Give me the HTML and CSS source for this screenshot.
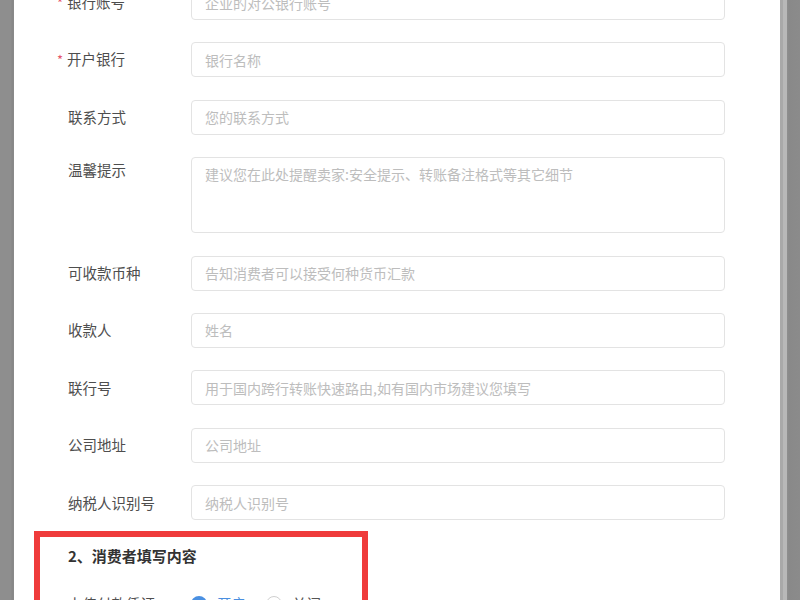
FILE: index.html
```html
<!DOCTYPE html>
<html lang="zh-CN">
<head>
<meta charset="utf-8">
<title>收款信息</title>
<link rel="stylesheet" href="styles.css">
</head>
<body>
<div class="screen">
  <div class="side-left"></div>
  <main class="panel">
    <form class="form">
      <div class="row">
        <label class="label"><span class="req">*</span>银行账号</label>
        <div class="input"><span class="ph">企业的对公银行账号</span></div>
      </div>
      <div class="row">
        <label class="label"><span class="req">*</span>开户银行</label>
        <div class="input"><span class="ph">银行名称</span></div>
      </div>
      <div class="row">
        <label class="label">联系方式</label>
        <div class="input"><span class="ph">您的联系方式</span></div>
      </div>
      <div class="row row-top">
        <label class="label">温馨提示</label>
        <div class="input textarea"><span class="ph">建议您在此处提醒卖家:安全提示、转账备注格式等其它细节</span></div>
      </div>
      <div class="row">
        <label class="label">可收款币种</label>
        <div class="input"><span class="ph">告知消费者可以接受何种货币汇款</span></div>
      </div>
      <div class="row">
        <label class="label">收款人</label>
        <div class="input"><span class="ph">姓名</span></div>
      </div>
      <div class="row">
        <label class="label">联行号</label>
        <div class="input"><span class="ph">用于国内跨行转账快速路由,如有国内市场建议您填写</span></div>
      </div>
      <div class="row">
        <label class="label">公司地址</label>
        <div class="input"><span class="ph">公司地址</span></div>
      </div>
      <div class="row">
        <label class="label">纳税人识别号</label>
        <div class="input"><span class="ph">纳税人识别号</span></div>
      </div>
    </form>
    <section class="highlight">
      <h3 class="sec-title">2、消费者填写内容</h3>
      <div class="row">
        <label class="label">上传付款凭证</label>
        <div class="radios">
          <span class="radio checked"><span class="dot"></span>开启</span>
          <span class="radio"><span class="dot"></span>关闭</span>
        </div>
      </div>
    </section>
  </main>
  <div class="side-right"></div>
</div>
</body>
</html>
```

FILE: styles.css
```css
* { box-sizing: border-box; }
html, body {
  margin: 0;
  padding: 0;
  width: 800px;
  height: 600px;
  overflow: hidden;
  background: #fff;
  font-family: "Noto Sans CJK SC", "Noto Sans", "Liberation Sans", sans-serif;
}
.screen {
  display: flex;
  width: 800px;
  height: 600px;
}
.side-left {
  width: 14px;
  flex: none;
  background: linear-gradient(to right, #8e8e8e 0, #8e8e8e 11px, #868686 12px, #8a8a8a 14px);
}
.side-right {
  width: 20px;
  flex: none;
  background: linear-gradient(to right, #a9a9a9 0, #a9a9a9 3px, #b8b8b8 3px, #b8b8b8 7px, #8f8f8f 7px, #898989 9px, #8b8b8b 20px);
}
.panel {
  flex: 1;
  background: #fff;
  overflow: hidden;
}
.form {
  display: flex;
  flex-direction: column;
  gap: 22.4px;
  margin-top: -15px;
  padding-right: 55px;
}
.row {
  display: flex;
  align-items: center;
}
.row-top { align-items: flex-start; }
.label {
  width: 177px;
  flex: none;
  padding-left: 54px;
  font-size: 14.5px;
  color: #4e4e4e;
  line-height: 20px;
  white-space: nowrap;
}
.row-top .label { padding-top: 3px; }
.req {
  color: #e5566b;
  margin-left: -11px;
  margin-right: 4px;
  font-size: 13px;
}
.input {
  flex: 1;
  height: 35px;
  border: 1px solid #e3e3e3;
  border-radius: 4px;
  padding: 0 13px;
  display: flex;
  align-items: center;
}
.textarea {
  height: 76px;
  align-items: flex-start;
  padding-top: 6px;
}
.ph {
  font-size: 14px;
  color: #bdbdbd;
  line-height: 20px;
  white-space: nowrap;
}
.highlight {
  margin: 11px 0 0 20px;
  width: 334px;
  height: 120px;
  border: 6px solid #ef3b3b;
  padding-top: 9px;
}
.highlight .label { padding-left: 28px; width: 151px; }
.sec-title {
  margin: 0 0 27px 0;
  padding-left: 28px;
  font-size: 15px;
  font-weight: bold;
  color: #333;
  line-height: 20px;
}
.radios {
  display: flex;
  gap: 20px;
  align-items: center;
}
.radio {
  display: flex;
  align-items: center;
  gap: 10px;
  font-size: 14.5px;
  color: #555;
}
.radio.checked { color: #4a8fe0; }
.dot {
  width: 16px;
  height: 16px;
  border-radius: 50%;
  border: 1px solid #cfcfcf;
  background: #fff;
}
.radio.checked .dot {
  border: 4px solid #4a90e2;
  background: #fff;
}
```
